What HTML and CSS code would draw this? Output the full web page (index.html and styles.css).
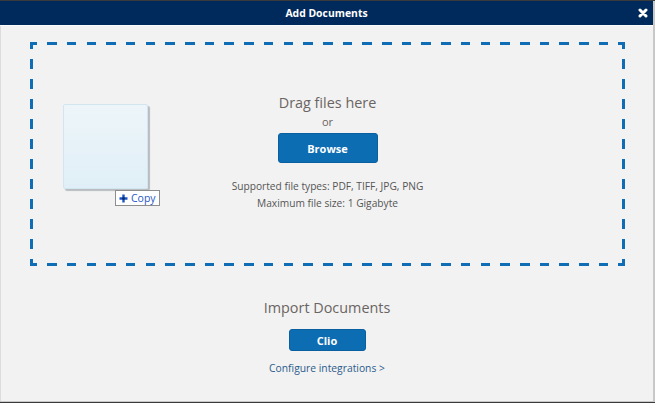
FILE: index.html
```html
<!DOCTYPE html>
<html>
<head>
<meta charset="utf-8">
<link rel="stylesheet" href="styles.css">
</head>
<body>
<div class="modal">
  <div class="header">
    <span class="title">Add Documents</span>
    <span class="close"><svg width="10" height="10" viewBox="0 0 10 10"><path d="M2 2 L8 8 M8 2 L2 8" stroke="#fff" stroke-width="3" stroke-linecap="round"/></svg></span>
  </div>
  <div class="content">
    <div class="dropzone">
      <div class="ghost"></div>
      <div class="copy-tip"><svg width="9" height="9" viewBox="0 0 9 9"><path d="M4.5 0.5 V8.5 M0.5 4.5 H8.5" stroke="#1a56c4" stroke-width="2.4"/><path d="M4.5 3 V6 M3 4.5 H6" stroke="#0b2f7a" stroke-width="1.4"/></svg><span>Copy</span></div>
      <div class="drag-title">Drag files here</div>
      <div class="or">or</div>
      <button class="btn btn-browse">Browse</button>
      <div class="info">Supported file types: PDF, TIFF, JPG, PNG</div>
      <div class="info">Maximum file size: 1 Gigabyte</div>
    </div>
    <div class="import">
      <div class="import-title">Import Documents</div>
      <button class="btn btn-clio">Clio</button>
      <a class="configure" href="#">Configure integrations &gt;</a>
    </div>
  </div>
</div>
</body>
</html>
```
FILE: styles.css
```css
html, body {
  margin: 0;
  padding: 0;
  height: 100%;
  background: #3a3a3a;
  font-family: "Open Sans", "Liberation Sans", sans-serif;
}
body {
  padding-top: 1px;
  box-sizing: border-box;
}
.modal {
  height: 401px;
  background: #f2f2f2;
  border-right: 2px solid #c8c8c8;
  border-bottom: 1px solid #c8c8c8;
  box-sizing: border-box;
  display: flex;
  flex-direction: column;
}
.header {
  height: 24px;
  background: #002a5b;
  border-bottom: 1px solid #fbfbfb;
  display: flex;
  align-items: center;
  justify-content: center;
  position: relative;
  color: #fff;
}
.title {
  font-size: 10.4px;
  font-weight: 700;
  line-height: 24px;
}
.close {
  position: absolute;
  right: 5px;
  top: 7px;
  width: 10px;
  height: 10px;
  display: flex;
}
.content {
  flex: 1;
  display: flex;
  flex-direction: column;
  align-items: stretch;
  border-left: 1px solid #dcdcdc;
}
.dropzone {
  position: relative;
  margin: 16px 28px 0 29px;
  height: 224px;
  box-sizing: border-box;
  padding-top: 51px;
  display: flex;
  flex-direction: column;
  align-items: center;
  background:
    repeating-linear-gradient(90deg, #0f6db6 0 7px, transparent 7px 17.1px, #0f6db6 17.1px 19.7px) left top / 100% 3px no-repeat,
    repeating-linear-gradient(90deg, #0f6db6 0 7px, transparent 7px 17.1px, #0f6db6 17.1px 19.7px) left bottom / 100% 3px no-repeat,
    repeating-linear-gradient(180deg, #0f6db6 0 7px, transparent 7px 17.36px, #0f6db6 17.36px 19.96px) left top / 3px 100% no-repeat,
    repeating-linear-gradient(180deg, #0f6db6 0 7px, transparent 7px 17.36px, #0f6db6 17.36px 19.96px) right top / 3px 100% no-repeat;
}
.ghost {
  position: absolute;
  left: 33px;
  top: 62px;
  width: 83px;
  height: 83px;
  border: 1px solid #d2e6f1;
  border-radius: 2px;
  background: linear-gradient(#edf5f9, #e0eff7);
  box-shadow: 2px 2px 1px #b9bdc0;
}
.copy-tip {
  position: absolute;
  left: 85px;
  top: 148px;
  width: 45px;
  height: 16px;
  border: 1px solid #8e8e8e;
  background: #fff;
  display: flex;
  align-items: center;
  gap: 3px;
  padding-left: 3px;
  box-sizing: border-box;
  font-size: 10.5px;
  color: #2a58c4;
  line-height: 13px;
}
.drag-title {
  font-size: 14.4px;
  line-height: 20px;
  color: #6a6462;
}
.or {
  margin-top: 1px;
  font-size: 11px;
  line-height: 16px;
  color: #6a6462;
}
.btn {
  font-family: "Open Sans", "Liberation Sans", sans-serif;
  font-weight: 700;
  color: #fff;
  background: #0c6db3;
  border: 1px solid #0a5f9e;
  border-radius: 3px;
  padding: 0;
  font-size: 11px;
}
.btn-browse {
  margin-top: 3px;
  width: 100px;
  height: 30px;
}
.info {
  font-size: 10.2px;
  line-height: 17px;
  color: #555;
}
.btn-browse + .info {
  margin-top: 15px;
}
.import {
  display: flex;
  flex-direction: column;
  align-items: center;
  margin-top: 32px;
}
.import-title {
  font-size: 14.4px;
  line-height: 20px;
  color: #6a6462;
}
.btn-clio {
  margin-top: 11px;
  width: 77px;
  height: 22px;
}
.configure {
  margin-top: 10px;
  font-size: 10.3px;
  line-height: 14px;
  color: #2c5b8c;
  text-decoration: none;
}
```
